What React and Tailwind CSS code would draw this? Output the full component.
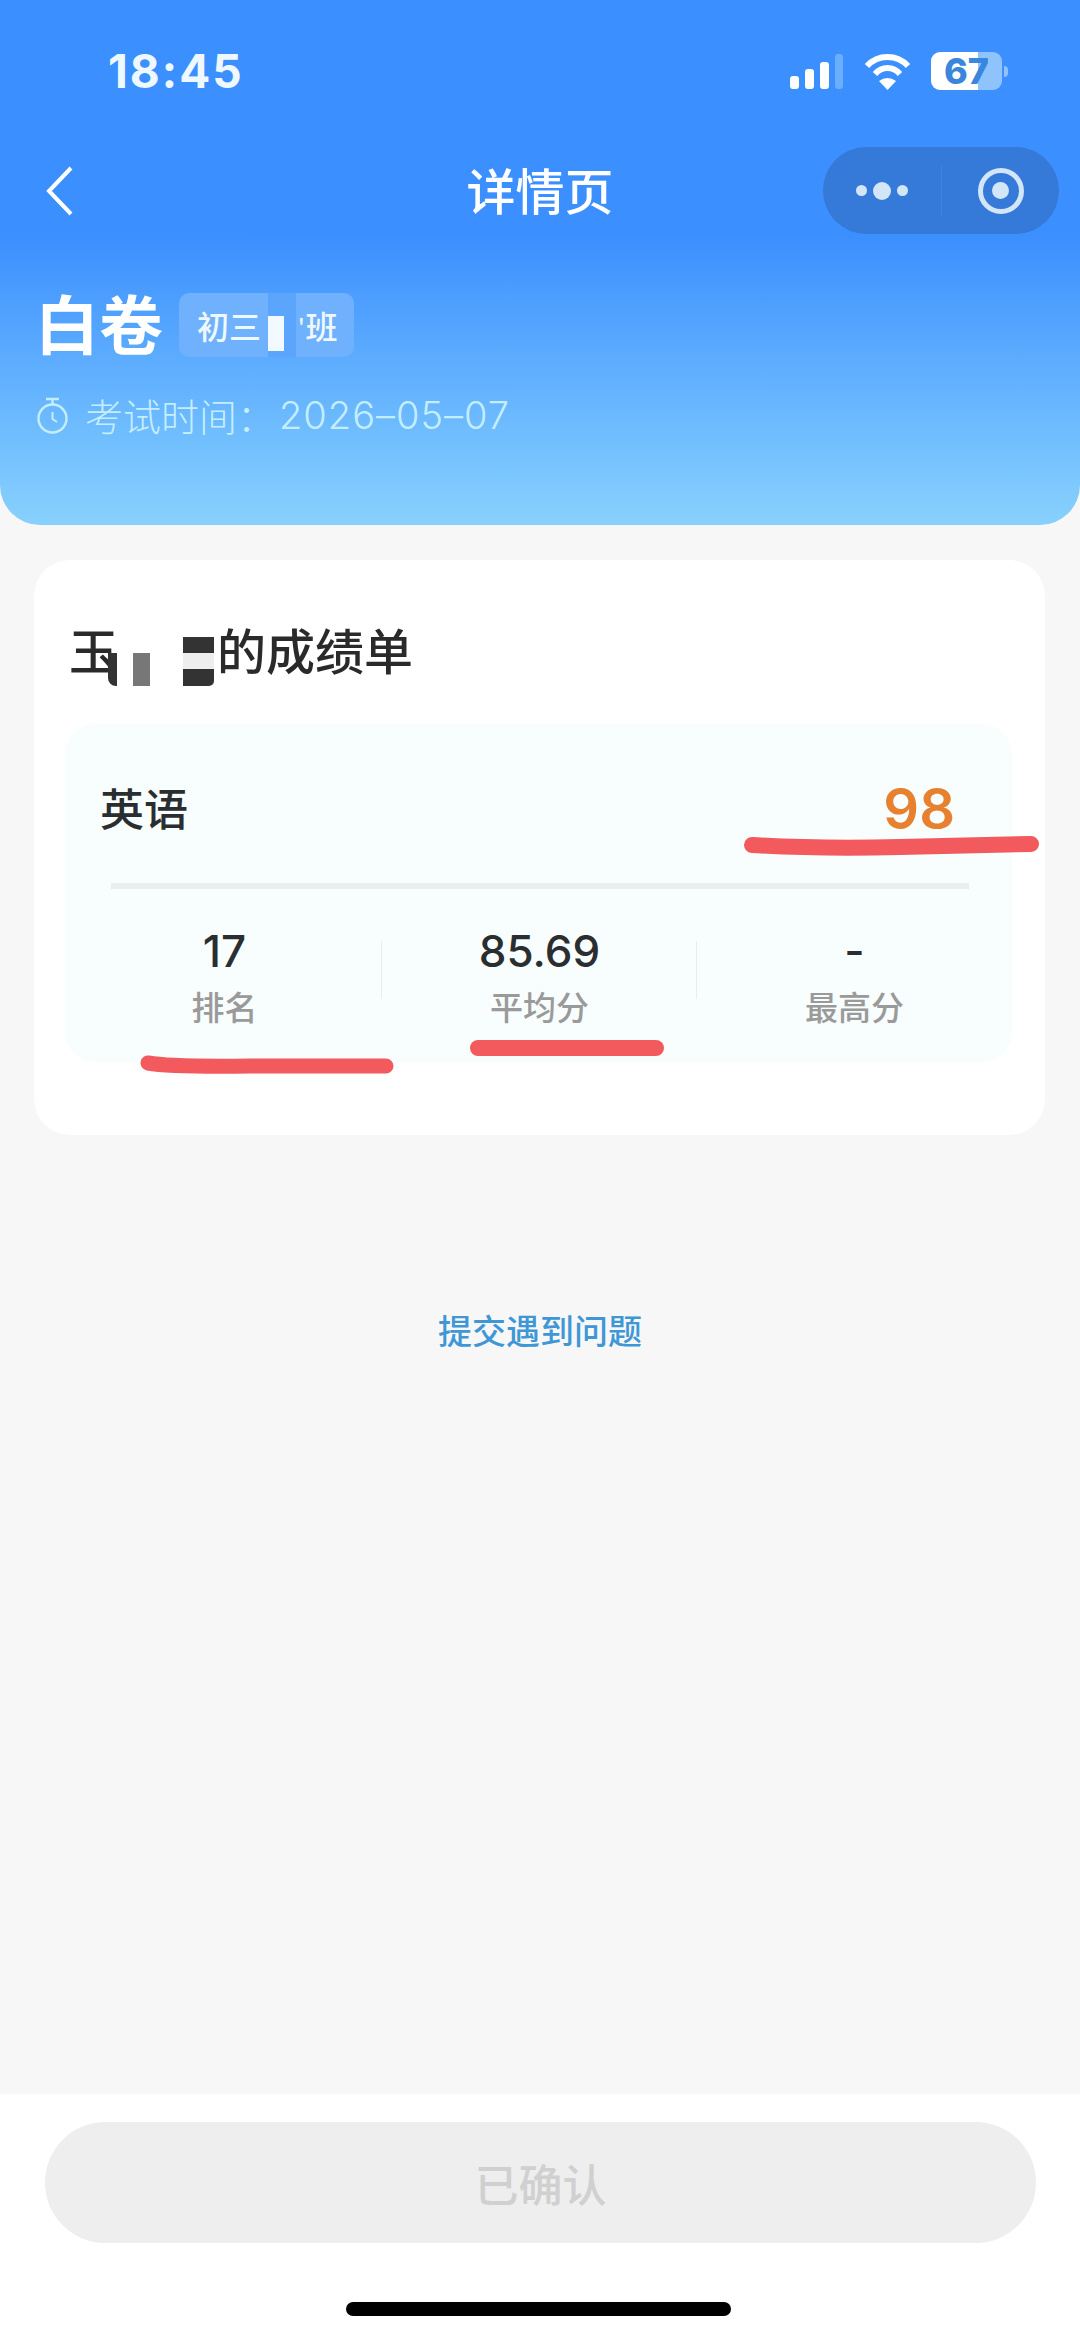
const CJK = "font-['Noto_Sans_CJK_SC',sans-serif]";

function StatusBar() {
  return (
    <div className="flex h-[142px] items-center justify-between pl-[108px] pr-[72px]">
      <span className="font-['Inter',sans-serif] text-[46px] font-bold leading-none tracking-[2px] text-[#eef8ff]">18:45</span>
      <div className="flex items-center">
        <div className="flex items-end gap-[6px] h-[36px]">
          <div className="h-[13px] w-[9px] rounded-[3px] bg-white" />
          <div className="h-[20px] w-[9px] rounded-[3px] bg-white" />
          <div className="h-[27px] w-[9px] rounded-[3px] bg-white" />
          <div className="h-[35px] w-[8px] rounded-[3px] bg-[#6aaefc]" />
        </div>
        <svg className="ml-[21px]" width="47" height="37" viewBox="0 0 47 37" fill="none">
          <path d="M3 13 C14 1 33 1 44 13" stroke="#fff" strokeWidth="6" />
          <path d="M11 21 C18 13 29 13 36 21" stroke="#fff" strokeWidth="6" />
          <path d="M15 28 Q23.5 22 32 28 L23.5 37 Z" fill="#fff" />
        </svg>
        <div className="relative ml-[20px] flex h-[38px] w-[71px]">
          <div className="w-[47px] rounded-l-[9px] bg-white" />
          <div className="flex-1 rounded-r-[9px] bg-[#8fc3fc]" />
          <span className="absolute inset-0 text-center font-['Inter',sans-serif] text-[36px] font-extrabold leading-[38px] text-[#3b86dd]">67</span>
        </div>
        <div className="ml-[2px] h-[11px] w-[4px] rounded-r-full bg-[#8fc3fc]" />
      </div>
    </div>
  );
}

function NavBar() {
  return (
    <div className="mt-[5px] flex h-[87px] items-center px-[21px]">
      <div className="w-[236px] pl-[25px]">
        <svg width="28" height="50" viewBox="0 0 28 50" fill="none">
          <path d="M25 2 L3 25 L25 48" stroke="#fff" strokeWidth="4" />
        </svg>
      </div>
      <div className="flex-1 pb-[5px] text-center text-[49px] font-medium leading-none text-white">详情页</div>
      <div className="flex h-[87px] w-[236px] items-center rounded-full bg-[#3579d9]">
        <div className="flex h-[50px] w-[119px] items-center justify-center gap-[6px] border-r border-[#3f84e2]">
          <div className="size-[11px] rounded-full bg-[#d3e6f8]" />
          <div className="size-[18px] rounded-full bg-[#d3e6f8]" />
          <div className="size-[11px] rounded-full bg-[#d3e6f8]" />
        </div>
        <div className="flex flex-1 items-center justify-center">
          <div className="flex size-[46px] items-center justify-center rounded-full border-[5px] border-[#d3e6f8]">
            <div className="size-[17px] rounded-full bg-[#d3e6f8]" />
          </div>
        </div>
      </div>
    </div>
  );
}

function ExamInfo() {
  return (
    <div className="pl-[36px]">
      <div className="mt-[59px] flex h-[64px] items-center">
        <span className="-ml-[1px] pb-[8px] text-[64px] font-bold leading-none text-white">白卷</span>
        <div className="ml-[16px] flex h-[64px] w-[175px] items-center rounded-[10px] bg-[#6fb1fd] pl-[18px] text-[32px] font-medium leading-none text-[#eef8ff]">
          <span>初三</span>
          <div className="ml-[7px] h-[64px] w-[28px] bg-[#5ba5fc] pt-[23px]">
            <div className="h-[35px] w-[16px] bg-[#f2faff]" />
          </div>
          <span className="ml-[2px] text-[22px]">'</span>
          <span className="ml-[1px]">班</span>
        </div>
      </div>
      <div className="mt-[39px] flex items-center text-[#c4eeff]">
        <svg width="33" height="37" viewBox="0 0 33 37" fill="none" stroke="#c4eeff" strokeWidth="2.4">
          <circle cx="16.5" cy="21.5" r="14" />
          <path d="M10 2 H23 M16.5 2 V7" />
          <path d="M16.5 15 V22 L21 25" strokeWidth="2" />
        </svg>
        <span className="ml-[16px] text-[38px] font-light leading-none">考试时间：</span>
        <span className="ml-[4px] font-['Inter',sans-serif] text-[38px] font-light leading-none tracking-[1px]">2026–05–07</span>
      </div>
    </div>
  );
}

function Redacted() {
  return (
    <div className="mt-[14px] flex h-[49px] w-[96px] shrink-0 items-start self-start">
      <div className="-ml-[10px] mt-[16px] h-[33px] w-[9px] rounded-bl-[8px] bg-[#333]" />
      <div className="ml-[16px] mt-[16px] h-[33px] w-[17px] bg-[#777]" />
      <div className="ml-[33px] flex w-[31px] flex-col">
        <div className="h-[16px] bg-[#333]" />
        <div className="h-[16px] bg-[#eee]" />
        <div className="h-[17px] rounded-br-[5px] bg-[#333]" />
      </div>
    </div>
  );
}

function Stat({ value, label, divider }) {
  return (
    <div className="relative flex flex-col items-center">
      <span className="font-['Inter',sans-serif] text-[44px] font-medium leading-none text-[#2a2e30]">{value}</span>
      <span className="mt-[17px] text-[33px] font-medium leading-none text-[#9a9a9a]">{label}</span>
      {divider && <div className="absolute right-0 top-[12px] h-[58px] w-px bg-[#e8eeee]" />}
    </div>
  );
}

function ScoreCard() {
  return (
    <div className="ml-[34px] mr-[35px] mt-[35px] rounded-[36px] bg-white pb-[73px] pt-[63px]">
      <div className="flex h-[50px] items-center pl-[35px] text-[49px] font-medium leading-none text-[#2a2a2a]">
        <span>玉</span>
        <Redacted />
        <span className="ml-[3px]">的成绩单</span>
      </div>
      <div className="ml-[31px] mr-[33px] mt-[51px] h-[338px] rounded-[30px] bg-[#f8fdfd]">
        <div className="flex h-[159px] items-center justify-between pl-[35px] pr-[57px] pt-[11px]">
          <span className="pb-[5px] text-[44px] font-medium leading-none text-[#2a2e30]">英语</span>
          <span className="font-['Inter',sans-serif] text-[56px] font-semibold leading-none text-[#e8812f]">98</span>
        </div>
        <div className="ml-[46px] mr-[43px] h-[6px] bg-[#e9eeee]" />
        <div className="mt-[40px] grid grid-cols-3 pl-[2px]">
          <Stat value="17" label="排名" divider />
          <Stat value="85.69" label="平均分" divider />
          <Stat value="-" label="最高分" />
        </div>
      </div>
    </div>
  );
}

export default function App() {
  return (
    <div className={`relative flex h-[2337px] w-[1080px] flex-col overflow-hidden bg-[#f7f7f7] ${CJK}`}>
      <div className="h-[525px] shrink-0 rounded-b-[40px] bg-linear-to-b from-[#3c8ffe] from-45% to-[#88d1fd]">
        <StatusBar />
        <NavBar />
        <ExamInfo />
      </div>

      <ScoreCard />

      <div className="mt-[178px] text-center text-[34px] font-medium leading-none text-[#3f97d6]">提交遇到问题</div>

      <div className="mt-auto h-[243px] shrink-0 bg-white px-[45px] pt-[28px]">
        <div className="flex h-[121px] w-[991px] items-center justify-center rounded-full bg-[#eee] text-[44px] font-medium leading-none text-[#d0d0d0]">已确认</div>
        <div className="mx-auto mt-[59px] h-[14px] w-[385px] -translate-x-[2px] rounded-full bg-black" />
      </div>

      {/* red marker strokes drawn over the screenshot */}
      <svg className="pointer-events-none absolute inset-0" width="1080" height="2337" fill="none" stroke="#f25a5e" strokeLinecap="round">
        <path d="M752 845 Q 820 849 900 847 T 1031 844" strokeWidth="16" />
        <path d="M148 1063 Q 170 1067 250 1066 L 386 1066" strokeWidth="15" />
        <path d="M478 1048 H 656" strokeWidth="16" />
      </svg>
    </div>
  );
}
